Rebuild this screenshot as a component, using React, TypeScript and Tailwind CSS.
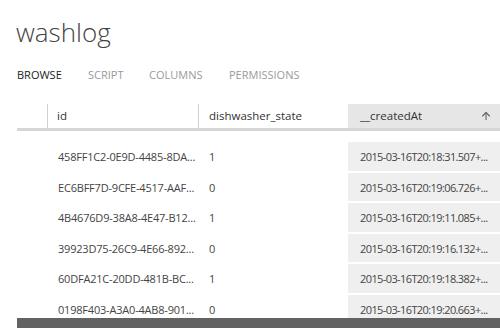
import { ArrowUp } from "lucide-react";

const rows = [
  { id: "458FF1C2-0E9D-4485-8DA...", state: "1", createdAt: "2015-03-16T20:18:31.507+..." },
  { id: "EC6BFF7D-9CFE-4517-AAF...", state: "0", createdAt: "2015-03-16T20:19:06.726+..." },
  { id: "4B4676D9-38A8-4E47-B12...", state: "1", createdAt: "2015-03-16T20:19:11.085+..." },
  { id: "39923D75-26C9-4E66-892...", state: "0", createdAt: "2015-03-16T20:19:16.132+..." },
  { id: "60DFA21C-20DD-481B-BC...", state: "1", createdAt: "2015-03-16T20:19:18.382+..." },
  { id: "0198F403-A3A0-4AB8-901...", state: "0", createdAt: "2015-03-16T20:19:20.663+..." },
];

const tabs = ["BROWSE", "SCRIPT", "COLUMNS", "PERMISSIONS"];

export default function App() {
  return (
    <div className="flex h-[328px] w-[500px] flex-col overflow-hidden bg-white font-['Open_Sans',sans-serif]">
      <h1 className="ml-[16px] mt-[15px] text-[26px] font-light leading-[34px] text-[#444]">washlog</h1>

      <nav className="ml-[17px] mt-[17px] flex h-[16px] items-center text-[11px] leading-none">
        {tabs.map((tab, i) => (
          <span
            key={tab}
            className={
              i === 0
                ? "w-[71px] text-[#222]"
                : i === 1
                  ? "w-[61px] text-[#9a9a9a]"
                  : i === 2
                    ? "w-[80px] text-[#9a9a9a]"
                    : "text-[#9a9a9a]"
            }
          >
            {tab}
          </span>
        ))}
      </nav>

      <div className="ml-[17px] mt-[22px] flex flex-1 flex-col">
        {/* header */}
        <div className="flex h-[27px] border-b-[3px] border-[#d6d6d6] text-[11.5px] text-[#333]">
          <div className="w-[30px] shrink-0" />
          <div className="flex w-[151px] shrink-0 items-center border-l border-[#d0d0d0] pl-[9px]">id</div>
          <div className="flex w-[150px] shrink-0 items-center border-l border-[#d0d0d0] pl-[10px]">dishwasher_state</div>
          <div className="flex flex-1 items-center justify-between bg-[#e6e6e6] pl-[12px] pr-[8px]">
            <span>__createdAt</span>
            <ArrowUp className="h-[12px] w-[12px] text-[#666]" strokeWidth={2.2} aria-hidden="true" />
          </div>
        </div>

        {/* rows */}
        <div className="mt-[11px] flex h-[176px] flex-col gap-[2px] overflow-hidden text-[11px] text-[#444]">
          {rows.map((row) => (
            <div key={row.id} className="flex h-[28.5px] shrink-0">
              <div className="w-[30px] shrink-0" />
              <div className="flex w-[151px] shrink-0 items-center whitespace-nowrap pl-[11px] pt-[2px] tracking-[-0.2px]">
                {row.id}
              </div>
              <div className="flex w-[150px] shrink-0 items-center pl-[11px] pt-[2px]">{row.state}</div>
              <div className="flex flex-1 items-center whitespace-nowrap bg-[#efefef] pl-[12px] pt-[2px] tracking-[-0.6px]">
                {row.createdAt}
              </div>
            </div>
          ))}
        </div>

        {/* scrollbar */}
        <div className="h-[10px] bg-[#626262]" />
      </div>
    </div>
  );
}
